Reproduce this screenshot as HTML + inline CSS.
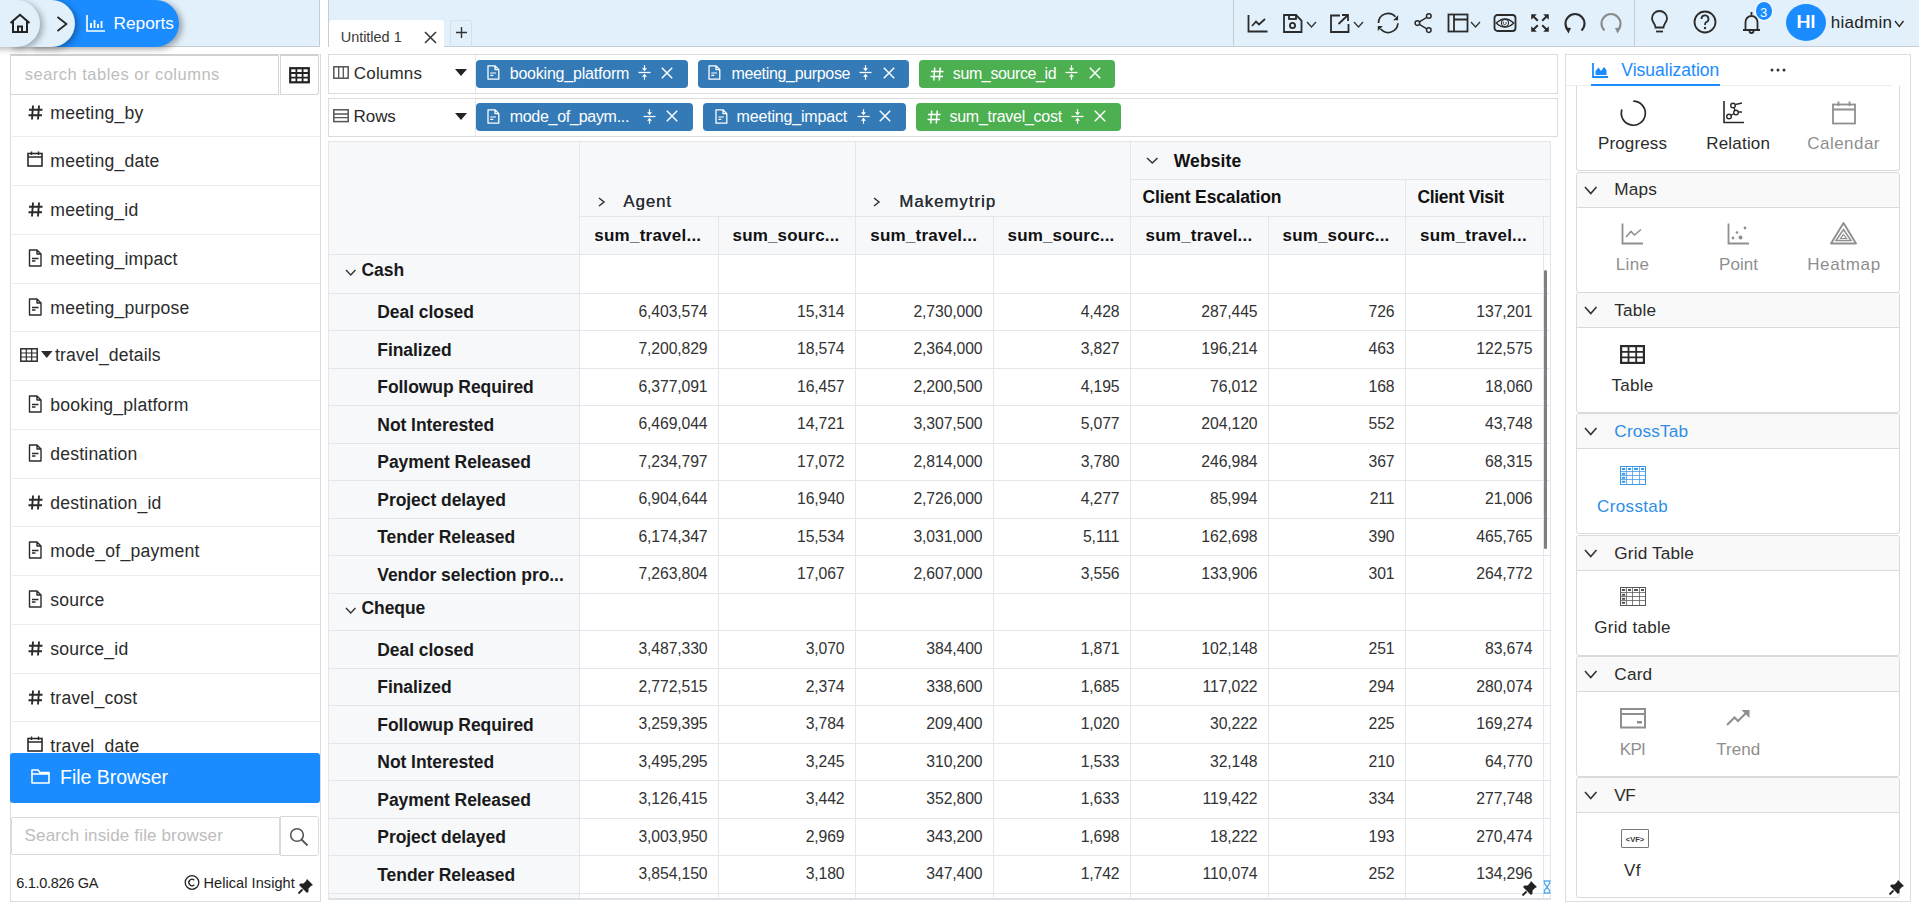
<!DOCTYPE html>
<html><head><meta charset="utf-8"><title>Reports</title>
<style>
html,body{margin:0;padding:0;}
body{width:1919px;height:910px;overflow:hidden;position:relative;background:#fff;font-family:"Liberation Sans",sans-serif;}
.a{position:absolute;box-sizing:border-box;}
svg.a{overflow:visible;}
.t{position:absolute;line-height:1;white-space:nowrap;}
</style></head><body>
<div class="a" style="left:0px;top:0px;width:320px;height:47px;background:#e1f0fa;border-right:1px solid #c8cdd2;border-bottom:1px solid #c8cdd2;"></div>
<div class="a" style="left:328px;top:0px;width:1591px;height:47px;background:#e1f0fa;border-left:1px solid #c8cdd2;border-bottom:1px solid #c8cdd2;"></div>
<div class="a" style="left:30px;top:0px;width:149px;height:47px;background:#1a8cff;border-radius:0 23.5px 23.5px 0;box-shadow:3px 2px 6px rgba(0,0,0,.35);z-index:1;"></div>
<div class="a" style="left:10px;top:0px;width:65px;height:47px;background:#e1f0fa;border-radius:0 23.5px 23.5px 0;box-shadow:3px 2px 6px rgba(0,0,0,.30);z-index:2;"></div>
<div class="a" style="left:-10px;top:0px;width:49.5px;height:47px;background:#e1f0fa;border-radius:0 23.5px 23.5px 0;box-shadow:3px 2px 6px rgba(0,0,0,.30);z-index:3;"></div>
<svg class="a" style="left:8.5px;top:13px;z-index:4;" width="22.0" height="20" viewBox="0 0 22.0 20" preserveAspectRatio="none"><path d="M1.5 10 L11 1.8 L20.5 10 M4 8 V19 H18 V8 M9 19 V13.5 H13 V19" fill="none" stroke="#222" stroke-width="2" stroke-linejoin="miter"/></svg>
<svg class="a" style="left:56px;top:16px;z-index:4;" width="12" height="16" viewBox="0 0 12 16" preserveAspectRatio="none"><path d="M1.5 1 L10.5 8 L1.5 15" fill="none" stroke="#222" stroke-width="1.7"/></svg>
<svg class="a" style="left:86px;top:15px;z-index:4;" width="20" height="17" viewBox="0 0 20 17" preserveAspectRatio="none"><path d="M1 0 V16 H19" fill="none" stroke="#fff" stroke-width="1.6"/><path d="M5 13 V8 M8.5 13 V5 M12 13 V9 M15.5 13 V6" stroke="#fff" stroke-width="1.8"/></svg>
<div class="t " style="top:14.65px;font-size:17.3px;color:#fff;left:113.50px;z-index:4;letter-spacing:-0.011px;">Reports</div>
<div class="a" style="left:329px;top:20px;width:115px;height:27px;background:#fff;border-radius:4px 4px 0 0;"></div>
<div class="t " style="top:30.32px;font-size:14.5px;color:#3a3a3a;left:340.70px;letter-spacing:-0.026px;">Untitled 1</div>
<svg class="a" style="left:424px;top:30.5px;" width="13" height="12.5" viewBox="0 0 13 12.5" preserveAspectRatio="none"><path d="M1 1 L12 12 M12 1 L1 12" stroke="#333" stroke-width="1.5"/></svg>
<div class="a" style="left:450px;top:20px;width:22px;height:27px;border:1px solid #d3e2ec;border-bottom:none;border-radius:3px 3px 0 0;"></div>
<svg class="a" style="left:455px;top:26px;" width="13" height="13" viewBox="0 0 13 13" preserveAspectRatio="none"><path d="M6.5 1 V12 M1 6.5 H12" stroke="#333" stroke-width="1.4"/></svg>
<div class="a" style="left:1233px;top:0px;width:1px;height:47px;background:#c8cdd2;"></div>
<div class="a" style="left:1634px;top:0px;width:1px;height:47px;background:#c8cdd2;"></div>
<svg class="a" style="left:1247px;top:14px;" width="22" height="19" viewBox="0 0 22 19" preserveAspectRatio="none"><path d="M1.5 1 V17.5 H20.5" stroke-width="1.8" fill="none" stroke="#2b2b2b"/><path d="M5 12 L9 7.5 L12 10.5 L18 5" stroke-width="1.8" fill="none" stroke="#2b2b2b"/></svg>
<svg class="a" style="left:1282px;top:13px;" width="22" height="20" viewBox="0 0 22 20" preserveAspectRatio="none"><path d="M2 2 H14 L19.5 7.5 V19 H2 Z" stroke-width="1.8" fill="none" stroke="#2b2b2b"/><rect x="7" y="2" width="7" height="4" stroke-width="1.8" fill="none" stroke="#2b2b2b"/><circle cx="10.5" cy="12.5" r="2.6" stroke-width="1.8" fill="none" stroke="#2b2b2b"/></svg>
<svg class="a" style="left:1306px;top:21px;" width="11" height="7" viewBox="0 0 11 7" preserveAspectRatio="none"><path d="M1 1 L5.5 6 L10 1" fill="none" stroke="#333" stroke-width="1.3"/></svg>
<svg class="a" style="left:1329px;top:13px;" width="22" height="20" viewBox="0 0 22 20" preserveAspectRatio="none"><path d="M11 2.5 H2 V19 H19.5 V11" stroke-width="1.8" fill="none" stroke="#2b2b2b"/><path d="M9.5 11 L18.5 2.5 M13 2 H19 V8" stroke-width="1.8" fill="none" stroke="#2b2b2b"/></svg>
<svg class="a" style="left:1353px;top:21px;" width="11" height="7" viewBox="0 0 11 7" preserveAspectRatio="none"><path d="M1 1 L5.5 6 L10 1" fill="none" stroke="#333" stroke-width="1.3"/></svg>
<svg class="a" style="left:1376px;top:12px;" width="24" height="22" viewBox="0 0 24 22" preserveAspectRatio="none"><path d="M2.5 11 A9.7 9.7 0 0 1 19.5 4.8 M21.9 11.3 A9.7 9.7 0 0 1 4.6 16.8" fill="none" stroke="#2b2b2b" stroke-width="1.7"/><path d="M22.1 3.3 V8.3 H17.1 Z M1.8 14 H6.8 L1.8 19 Z" fill="#2b2b2b"/></svg>
<svg class="a" style="left:1413px;top:12px;" width="20" height="22" viewBox="0 0 20 22" preserveAspectRatio="none"><circle cx="15.8" cy="4" r="2.3" fill="none" stroke="#2b2b2b" stroke-width="1.5"/><circle cx="4.4" cy="11.1" r="2.3" fill="none" stroke="#2b2b2b" stroke-width="1.5"/><circle cx="15.8" cy="18.1" r="2.3" fill="none" stroke="#2b2b2b" stroke-width="1.5"/><path d="M6.4 9.9 L13.8 5.3 M6.4 12.3 L13.8 16.8" fill="none" stroke="#2b2b2b" stroke-width="1.4"/></svg>
<svg class="a" style="left:1447px;top:13px;" width="23" height="20" viewBox="0 0 23 20" preserveAspectRatio="none"><rect x="1.5" y="1.5" width="19" height="17" stroke-width="1.8" fill="none" stroke="#2b2b2b"/><path d="M7 1.5 V18.5 M7 6.5 H20.5" stroke-width="1.8" fill="none" stroke="#2b2b2b"/></svg>
<svg class="a" style="left:1470px;top:21px;" width="11" height="7" viewBox="0 0 11 7" preserveAspectRatio="none"><path d="M1 1 L5.5 6 L10 1" fill="none" stroke="#333" stroke-width="1.3"/></svg>
<svg class="a" style="left:1493px;top:13px;" width="25" height="20" viewBox="0 0 25 20" preserveAspectRatio="none"><rect x="1.5" y="2" width="21" height="16" rx="3" stroke-width="1.8" fill="none" stroke="#2b2b2b"/><path d="M3.2 10 Q12 1.8 20.8 10 Q12 18.2 3.2 10 Z" fill="none" stroke="#2b2b2b" stroke-width="1.4"/><circle cx="12" cy="10" r="3.6" fill="none" stroke="#2b2b2b" stroke-width="1.1"/><path d="M13 9 A1.6 1.6 0 1 1 11 8.5" fill="none" stroke="#2b2b2b" stroke-width="0.9"/></svg>
<svg class="a" style="left:1530px;top:13px;" width="20" height="20" viewBox="0 0 20 20" preserveAspectRatio="none"><path d="M1.2 1.2 H6.8 L1.2 6.8 Z M18.8 1.2 H13.2 L18.8 6.8 Z M1.2 18.8 V13.2 L6.8 18.8 Z M18.8 18.8 V13.2 L13.2 18.8 Z" fill="#2b2b2b"/><path d="M3 3 L7.8 7.8 M17 3 L12.2 7.8 M3 17 L7.8 12.2 M17 17 L12.2 12.2" stroke="#2b2b2b" stroke-width="2"/></svg>
<svg class="a" style="left:1563px;top:12px;" width="24" height="22" viewBox="0 0 24 22" preserveAspectRatio="none"><path d="M5.5 18.5 A9.5 9.5 0 1 1 18.5 18.5" fill="none" stroke="#2b2b2b" stroke-width="2.1"/><path d="M2 15.5 L8 16 L5.5 21.5 Z" fill="#2b2b2b"/></svg>
<svg class="a" style="left:1599px;top:12px;" width="24" height="22" viewBox="0 0 24 22" preserveAspectRatio="none"><path d="M5.5 18.5 A9.5 9.5 0 1 1 18.5 18.5" fill="none" stroke="#8a8a8a" stroke-width="2.1"/><path d="M22 15.5 L16 16 L18.5 21.5 Z" fill="#8a8a8a"/></svg>
<svg class="a" style="left:1650px;top:10px;" width="19" height="24" viewBox="0 0 19 24" preserveAspectRatio="none"><path d="M5.5 17.5 C5.5 14 2 12 2 8.5 A7.5 7.5 0 0 1 17 8.5 C17 12 13.5 14 13.5 17.5 Z" stroke-width="1.8" fill="none" stroke="#2b2b2b"/><path d="M6 21.5 H13" stroke-width="1.8" fill="none" stroke="#2b2b2b"/></svg>
<svg class="a" style="left:1693px;top:10px;" width="24" height="24" viewBox="0 0 24 24" preserveAspectRatio="none"><circle cx="12" cy="12" r="10.5" stroke-width="1.8" fill="none" stroke="#2b2b2b"/><path d="M8.5 9 A3.5 3.5 0 1 1 13 12.3 C12 12.8 12 13.5 12 15" stroke-width="1.8" fill="none" stroke="#2b2b2b"/><circle cx="12" cy="18" r="1.2" fill="#2b2b2b"/></svg>
<svg class="a" style="left:1742px;top:10px;" width="19" height="24" viewBox="0 0 19 24" preserveAspectRatio="none"><path d="M3.5 19.5 V12 A6 6 0 0 1 15.5 12 V19.5 M1 20 H18" stroke-width="1.8" fill="none" stroke="#2b2b2b"/><path d="M9.5 2 V5" stroke-width="1.8" fill="none" stroke="#2b2b2b"/><path d="M7.5 21 A2 2 0 0 0 11.5 21" stroke-width="1.8" fill="none" stroke="#2b2b2b"/></svg>
<div class="a" style="left:1754.5px;top:1px;width:18.5px;height:19.5px;background:#1a8cff;border:1px solid #fff;border-radius:50%;box-sizing:border-box;"></div>
<div class="t " style="top:6.49px;font-size:13px;color:#fff;left:1753.70px;width:20px;text-align:center;">3</div>
<div class="a" style="left:1786px;top:4px;width:40px;height:37px;background:#1a8cff;border-radius:50%;"></div>
<div class="t " style="top:12.21px;font-size:19px;color:#fff;left:1786.00px;width:40px;text-align:center;text-shadow:0.4px 0 0 #fff,-0.2px 0 0 #fff;">HI</div>
<div class="t " style="top:13.70px;font-size:17px;color:#222;left:1830.80px;letter-spacing:0.281px;">hiadmin</div>
<svg class="a" style="left:1893.5px;top:19.5px;" width="10.5" height="7.5" viewBox="0 0 10.5 7.5" preserveAspectRatio="none"><path d="M1 1 L5.25 6.5 L9.5 1" fill="none" stroke="#222" stroke-width="1.3"/></svg>
<div class="a" style="left:10px;top:54px;width:311px;height:848px;border:1px solid #dcdcdc;background:#fff;"></div>
<div class="a" style="left:10px;top:54px;width:269px;height:41px;border:1px solid #d6d6d6;border-top:2px solid #d0d0d0;border-radius:2px 0 0 2px;"></div>
<div class="t " style="top:66.32px;font-size:16.5px;color:#bdbdbd;left:24.80px;letter-spacing:0.482px;">search tables or columns</div>
<div class="a" style="left:279.5px;top:54px;width:39.5px;height:41px;border:1px solid #d6d6d6;border-top:2px solid #d0d0d0;border-radius:0 3px 3px 0;"></div>
<svg class="a" style="left:288.5px;top:66.5px;" width="21.5" height="17.0" viewBox="0 0 21.5 17.0" preserveAspectRatio="none"><rect x="1.2" y="1.2" width="18.6" height="14.1" fill="none" stroke="#222" stroke-width="2.2"/><path d="M7.4 1 V15.5 M13.6 1 V15.5 M1 6 H20 M1 10.6 H20" stroke="#222" stroke-width="1.8"/></svg>
<svg class="a" style="left:27.5px;top:104.6px;" width="15.0" height="15.0" viewBox="0 0 15.0 15.0" preserveAspectRatio="none"><path d="M5 0.5 L4 14.5 M11 0.5 L10 14.5 M1 4.8 H14.5 M0.5 10.2 H14" stroke="#2b2b2b" stroke-width="1.9"/></svg>
<div class="t " style="top:104.69px;font-size:17.6px;color:#2b2b2b;left:50.30px;letter-spacing:0.220px;">meeting_by</div>
<div class="a" style="left:10px;top:136.3px;width:310px;height:1.0px;background:#ececec;"></div>
<svg class="a" style="left:26.8px;top:151.35px;" width="15.999999999999996" height="16.0" viewBox="0 0 15.999999999999996 16.0" preserveAspectRatio="none"><rect x="1" y="2.5" width="14" height="12.5" fill="none" stroke="#2b2b2b" stroke-width="1.6"/><path d="M1 6 H15 M4.5 0.5 V4 M11.5 0.5 V4" stroke="#2b2b2b" stroke-width="1.4"/></svg>
<div class="t " style="top:153.44px;font-size:17.6px;color:#2b2b2b;left:50.30px;letter-spacing:0.215px;">meeting_date</div>
<div class="a" style="left:10px;top:185.05px;width:310px;height:1.0px;background:#ececec;"></div>
<svg class="a" style="left:27.5px;top:202.1px;" width="15.0" height="15.0" viewBox="0 0 15.0 15.0" preserveAspectRatio="none"><path d="M5 0.5 L4 14.5 M11 0.5 L10 14.5 M1 4.8 H14.5 M0.5 10.2 H14" stroke="#2b2b2b" stroke-width="1.9"/></svg>
<div class="t " style="top:202.19px;font-size:17.6px;color:#2b2b2b;left:50.30px;letter-spacing:0.208px;">meeting_id</div>
<div class="a" style="left:10px;top:233.8px;width:310px;height:1.0px;background:#ececec;"></div>
<svg class="a" style="left:27.8px;top:248.85000000000002px;" width="13.999999999999996" height="18.0" viewBox="0 0 13.999999999999996 18.0" preserveAspectRatio="none"><path d="M1.5 1 H9 L13 5 V17 H1.5 Z M9 1 V5 H13" fill="none" stroke="#2b2b2b" stroke-width="1.4" stroke-linejoin="round"/><path d="M4 9.5 H10.5 M4 12 H7.5" stroke="#2b2b2b" stroke-width="1.3"/></svg>
<div class="t " style="top:250.94px;font-size:17.6px;color:#2b2b2b;left:50.30px;letter-spacing:0.215px;">meeting_impact</div>
<div class="a" style="left:10px;top:282.55px;width:310px;height:1.0px;background:#ececec;"></div>
<svg class="a" style="left:27.8px;top:297.6px;" width="13.999999999999996" height="18.0" viewBox="0 0 13.999999999999996 18.0" preserveAspectRatio="none"><path d="M1.5 1 H9 L13 5 V17 H1.5 Z M9 1 V5 H13" fill="none" stroke="#2b2b2b" stroke-width="1.4" stroke-linejoin="round"/><path d="M4 9.5 H10.5 M4 12 H7.5" stroke="#2b2b2b" stroke-width="1.3"/></svg>
<div class="t " style="top:299.69px;font-size:17.6px;color:#2b2b2b;left:50.30px;letter-spacing:0.219px;">meeting_purpose</div>
<div class="a" style="left:10px;top:331.3px;width:310px;height:1.0px;background:#ececec;"></div>
<svg class="a" style="left:19.5px;top:348.15000000000003px;" width="18.0" height="14.0" viewBox="0 0 18.0 14.0" preserveAspectRatio="none"><rect x="0.8" y="0.8" width="16.4" height="12.4" fill="none" stroke="#2b2b2b" stroke-width="1.5"/><path d="M6.3 1 V13 M11.7 1 V13 M1 5 H17 M1 9 H17" stroke="#2b2b2b" stroke-width="1.2"/></svg>
<svg class="a" style="left:41px;top:350.85px;" width="12" height="7.0" viewBox="0 0 12 7.0" preserveAspectRatio="none"><path d="M0 0 H11.5 L5.75 7 Z" fill="#2b2b2b"/></svg>
<div class="t " style="top:346.94px;font-size:17.6px;color:#2b2b2b;left:55.00px;letter-spacing:0.150px;">travel_details</div>
<div class="a" style="left:10px;top:380.05px;width:310px;height:1.0px;background:#ececec;"></div>
<svg class="a" style="left:27.8px;top:395.1px;" width="13.999999999999996" height="18.0" viewBox="0 0 13.999999999999996 18.0" preserveAspectRatio="none"><path d="M1.5 1 H9 L13 5 V17 H1.5 Z M9 1 V5 H13" fill="none" stroke="#2b2b2b" stroke-width="1.4" stroke-linejoin="round"/><path d="M4 9.5 H10.5 M4 12 H7.5" stroke="#2b2b2b" stroke-width="1.3"/></svg>
<div class="t " style="top:397.19px;font-size:17.6px;color:#2b2b2b;left:50.30px;letter-spacing:0.204px;">booking_platform</div>
<div class="a" style="left:10px;top:428.8px;width:310px;height:1.0px;background:#ececec;"></div>
<svg class="a" style="left:27.8px;top:443.85px;" width="13.999999999999996" height="18.0" viewBox="0 0 13.999999999999996 18.0" preserveAspectRatio="none"><path d="M1.5 1 H9 L13 5 V17 H1.5 Z M9 1 V5 H13" fill="none" stroke="#2b2b2b" stroke-width="1.4" stroke-linejoin="round"/><path d="M4 9.5 H10.5 M4 12 H7.5" stroke="#2b2b2b" stroke-width="1.3"/></svg>
<div class="t " style="top:445.94px;font-size:17.6px;color:#2b2b2b;left:50.30px;letter-spacing:0.187px;">destination</div>
<div class="a" style="left:10px;top:477.55px;width:310px;height:1.0px;background:#ececec;"></div>
<svg class="a" style="left:27.5px;top:494.6px;" width="15.0" height="15.0" viewBox="0 0 15.0 15.0" preserveAspectRatio="none"><path d="M5 0.5 L4 14.5 M11 0.5 L10 14.5 M1 4.8 H14.5 M0.5 10.2 H14" stroke="#2b2b2b" stroke-width="1.9"/></svg>
<div class="t " style="top:494.69px;font-size:17.6px;color:#2b2b2b;left:50.30px;letter-spacing:0.188px;">destination_id</div>
<div class="a" style="left:10px;top:526.3px;width:310px;height:1.0px;background:#ececec;"></div>
<svg class="a" style="left:27.8px;top:541.35px;" width="13.999999999999996" height="18.0" viewBox="0 0 13.999999999999996 18.0" preserveAspectRatio="none"><path d="M1.5 1 H9 L13 5 V17 H1.5 Z M9 1 V5 H13" fill="none" stroke="#2b2b2b" stroke-width="1.4" stroke-linejoin="round"/><path d="M4 9.5 H10.5 M4 12 H7.5" stroke="#2b2b2b" stroke-width="1.3"/></svg>
<div class="t " style="top:543.44px;font-size:17.6px;color:#2b2b2b;left:50.30px;letter-spacing:0.235px;">mode_of_payment</div>
<div class="a" style="left:10px;top:575.05px;width:310px;height:1.0px;background:#ececec;"></div>
<svg class="a" style="left:27.8px;top:590.1px;" width="13.999999999999996" height="18.0" viewBox="0 0 13.999999999999996 18.0" preserveAspectRatio="none"><path d="M1.5 1 H9 L13 5 V17 H1.5 Z M9 1 V5 H13" fill="none" stroke="#2b2b2b" stroke-width="1.4" stroke-linejoin="round"/><path d="M4 9.5 H10.5 M4 12 H7.5" stroke="#2b2b2b" stroke-width="1.3"/></svg>
<div class="t " style="top:592.19px;font-size:17.6px;color:#2b2b2b;left:50.30px;letter-spacing:0.213px;">source</div>
<div class="a" style="left:10px;top:623.8px;width:310px;height:1.0px;background:#ececec;"></div>
<svg class="a" style="left:27.5px;top:640.85px;" width="15.0" height="15.0" viewBox="0 0 15.0 15.0" preserveAspectRatio="none"><path d="M5 0.5 L4 14.5 M11 0.5 L10 14.5 M1 4.8 H14.5 M0.5 10.2 H14" stroke="#2b2b2b" stroke-width="1.9"/></svg>
<div class="t " style="top:640.94px;font-size:17.6px;color:#2b2b2b;left:50.30px;letter-spacing:0.205px;">source_id</div>
<div class="a" style="left:10px;top:672.55px;width:310px;height:1.0px;background:#ececec;"></div>
<svg class="a" style="left:27.5px;top:689.6px;" width="15.0" height="15.0" viewBox="0 0 15.0 15.0" preserveAspectRatio="none"><path d="M5 0.5 L4 14.5 M11 0.5 L10 14.5 M1 4.8 H14.5 M0.5 10.2 H14" stroke="#2b2b2b" stroke-width="1.9"/></svg>
<div class="t " style="top:689.69px;font-size:17.6px;color:#2b2b2b;left:50.30px;letter-spacing:0.187px;">travel_cost</div>
<div class="a" style="left:10px;top:721.3px;width:310px;height:1.0px;background:#ececec;"></div>
<svg class="a" style="left:26.8px;top:736.35px;" width="15.999999999999996" height="16.0" viewBox="0 0 15.999999999999996 16.0" preserveAspectRatio="none"><rect x="1" y="2.5" width="14" height="12.5" fill="none" stroke="#2b2b2b" stroke-width="1.6"/><path d="M1 6 H15 M4.5 0.5 V4 M11.5 0.5 V4" stroke="#2b2b2b" stroke-width="1.4"/></svg>
<div class="t " style="top:738.44px;font-size:17.6px;color:#2b2b2b;left:50.30px;letter-spacing:0.192px;">travel_date</div>
<div class="a" style="left:10px;top:753px;width:310px;height:49.5px;background:#1a8cff;border-radius:3px;"></div>
<svg class="a" style="left:30.5px;top:768.5px;" width="19.5" height="15.0" viewBox="0 0 19.5 15.0" preserveAspectRatio="none"><path d="M1 1 H7 L9 3.5 H18 V14 H1 Z M1 5 H18" fill="none" stroke="#fff" stroke-width="1.6" stroke-linejoin="round"/></svg>
<div class="t " style="top:767.68px;font-size:19.5px;color:#fff;left:60.10px;letter-spacing:-0.030px;">File Browser</div>
<div class="a" style="left:11px;top:816.5px;width:269px;height:38.5px;border:1px solid #d9d9d9;border-radius:2px 0 0 2px;"></div>
<div class="t " style="top:826.80px;font-size:17px;color:#bdbdbd;left:24.60px;letter-spacing:0.144px;">Search inside file browser</div>
<div class="a" style="left:279.5px;top:816px;width:39.0px;height:39.5px;border:1px solid #d9d9d9;border-radius:0 3px 3px 0;"></div>
<svg class="a" style="left:289px;top:826.5px;" width="21" height="20.0" viewBox="0 0 21 20.0" preserveAspectRatio="none"><circle cx="8" cy="8" r="6.3" fill="none" stroke="#555" stroke-width="1.6"/><path d="M12.5 12.5 L18.5 18.5" stroke="#555" stroke-width="1.8"/></svg>
<div class="t " style="top:876.32px;font-size:14.5px;color:#222;left:16.30px;letter-spacing:-0.304px;">6.1.0.826 GA</div>
<svg class="a" style="left:184px;top:875px;" width="16.5" height="15.5" viewBox="0 0 16.5 15.5" preserveAspectRatio="none"><circle cx="8" cy="7.5" r="6.8" fill="none" stroke="#222" stroke-width="1.3"/><path d="M10.3 5.2 A3.2 3.2 0 1 0 10.3 9.8" fill="none" stroke="#222" stroke-width="1.3"/></svg>
<div class="t " style="top:876.32px;font-size:14.5px;color:#222;left:203.50px;letter-spacing:0.069px;">Helical Insight</div>
<svg class="a" style="left:298px;top:878px;" width="16" height="16" viewBox="0 0 16 16" preserveAspectRatio="none"><path d="M9 1 L15 7 L13 8 L10.5 10.5 L10.5 13.5 L9 15 L1 7 L2.5 5.5 L5.5 5.5 L8 3 Z" fill="#222"/><path d="M4.5 11.5 L0.5 15.5" stroke="#222" stroke-width="1.8"/></svg>
<div class="a" style="left:328px;top:54px;width:1230px;height:40px;border:1px solid #dcdcdc;"></div>
<div class="a" style="left:475px;top:55px;width:1px;height:38px;background:#e6e6e6;"></div>
<div class="a" style="left:328px;top:98px;width:1230px;height:39px;border:1px solid #dcdcdc;"></div>
<div class="a" style="left:475px;top:99px;width:1px;height:37px;background:#e6e6e6;"></div>
<svg class="a" style="left:333px;top:66px;" width="16" height="13" viewBox="0 0 16 13" preserveAspectRatio="none"><rect x="0.8" y="0.8" width="14.4" height="11.4" fill="none" stroke="#555" stroke-width="1.5"/><path d="M5.7 1 V12 M10.3 1 V12" stroke="#555" stroke-width="1.3"/></svg>
<div class="t " style="top:64.90px;font-size:17px;color:#2b2b2b;left:353.80px;letter-spacing:0.188px;">Columns</div>
<svg class="a" style="left:455px;top:69px;" width="12" height="7" viewBox="0 0 12 7" preserveAspectRatio="none"><path d="M0 0 H12 L6 7 Z" fill="#222"/></svg>
<svg class="a" style="left:333px;top:108.5px;" width="16" height="13.5" viewBox="0 0 16 13.5" preserveAspectRatio="none"><rect x="0.8" y="0.8" width="14.4" height="11.8" fill="none" stroke="#555" stroke-width="1.5"/><path d="M1 5 H15 M1 8.6 H15" stroke="#555" stroke-width="1.3"/></svg>
<div class="t " style="top:108.30px;font-size:17px;color:#2b2b2b;left:353.60px;letter-spacing:-0.077px;">Rows</div>
<svg class="a" style="left:455px;top:113px;" width="12" height="7" viewBox="0 0 12 7" preserveAspectRatio="none"><path d="M0 0 H12 L6 7 Z" fill="#222"/></svg>
<div class="a" style="left:476px;top:60px;width:212px;height:27.799999999999997px;background:#337ab7;border-radius:4px;"></div>
<svg class="a" style="left:487.3px;top:65.3px;" width="12.699999999999989" height="15.0" viewBox="0 0 12.699999999999989 15.0" preserveAspectRatio="none"><path d="M1 0.8 H8 L11.8 4.6 V14.2 H1 Z M8 0.8 V4.6 H11.8" fill="none" stroke="#fff" stroke-width="1.3" stroke-linejoin="round"/><path d="M3.3 8 H9 M3.3 10.3 H6.3" stroke="#fff" stroke-width="1.2"/></svg>
<div class="t " style="top:65.95px;font-size:16px;color:#fff;left:509.70px;letter-spacing:-0.203px;">booking_platform</div>
<svg class="a" style="left:638px;top:65.4px;" width="13" height="15.0" viewBox="0 0 13 15.0" preserveAspectRatio="none"><path d="M0.5 7.5 H12.5" stroke="#fff" stroke-width="1.3"/><path d="M6.5 0.3 V4 M6.5 11 V14.7" stroke="#fff" stroke-width="1.2"/><path d="M4 3.2 L6.5 6.2 L9 3.2 Z M4 11.8 L6.5 8.8 L9 11.8 Z" fill="#fff"/></svg>
<svg class="a" style="left:660.6px;top:67px;" width="12.0" height="12" viewBox="0 0 12.0 12" preserveAspectRatio="none"><path d="M0.8 0.8 L11.2 11.2 M11.2 0.8 L0.8 11.2" stroke="#fff" stroke-width="1.5"/></svg>
<div class="a" style="left:698px;top:60px;width:211px;height:27.799999999999997px;background:#337ab7;border-radius:4px;"></div>
<svg class="a" style="left:708.3px;top:65.3px;" width="12.700000000000045" height="15.0" viewBox="0 0 12.700000000000045 15.0" preserveAspectRatio="none"><path d="M1 0.8 H8 L11.8 4.6 V14.2 H1 Z M8 0.8 V4.6 H11.8" fill="none" stroke="#fff" stroke-width="1.3" stroke-linejoin="round"/><path d="M3.3 8 H9 M3.3 10.3 H6.3" stroke="#fff" stroke-width="1.2"/></svg>
<div class="t " style="top:65.95px;font-size:16px;color:#fff;left:731.40px;letter-spacing:-0.323px;">meeting_purpose</div>
<svg class="a" style="left:859.2px;top:65.4px;" width="13.0" height="15.0" viewBox="0 0 13.0 15.0" preserveAspectRatio="none"><path d="M0.5 7.5 H12.5" stroke="#fff" stroke-width="1.3"/><path d="M6.5 0.3 V4 M6.5 11 V14.7" stroke="#fff" stroke-width="1.2"/><path d="M4 3.2 L6.5 6.2 L9 3.2 Z M4 11.8 L6.5 8.8 L9 11.8 Z" fill="#fff"/></svg>
<svg class="a" style="left:882.6px;top:67px;" width="12.0" height="12" viewBox="0 0 12.0 12" preserveAspectRatio="none"><path d="M0.8 0.8 L11.2 11.2 M11.2 0.8 L0.8 11.2" stroke="#fff" stroke-width="1.5"/></svg>
<div class="a" style="left:919px;top:60px;width:196px;height:27.799999999999997px;background:#4caf50;border-radius:4px;"></div>
<svg class="a" style="left:929.5px;top:67px;" width="14.0" height="14" viewBox="0 0 14.0 14" preserveAspectRatio="none"><path d="M4.7 0.5 L3.8 13.5 M10.2 0.5 L9.3 13.5 M1 4.5 H13.5 M0.5 9.5 H13" stroke="#fff" stroke-width="1.5"/></svg>
<div class="t " style="top:65.95px;font-size:16px;color:#fff;left:952.80px;letter-spacing:-0.385px;">sum_source_id</div>
<svg class="a" style="left:1065.3px;top:65.4px;" width="13.0" height="15.0" viewBox="0 0 13.0 15.0" preserveAspectRatio="none"><path d="M0.5 7.5 H12.5" stroke="#fff" stroke-width="1.3"/><path d="M6.5 0.3 V4 M6.5 11 V14.7" stroke="#fff" stroke-width="1.2"/><path d="M4 3.2 L6.5 6.2 L9 3.2 Z M4 11.8 L6.5 8.8 L9 11.8 Z" fill="#fff"/></svg>
<svg class="a" style="left:1088.8px;top:67px;" width="12.0" height="12" viewBox="0 0 12.0 12" preserveAspectRatio="none"><path d="M0.8 0.8 L11.2 11.2 M11.2 0.8 L0.8 11.2" stroke="#fff" stroke-width="1.5"/></svg>
<div class="a" style="left:476px;top:103.2px;width:217px;height:27.799999999999997px;background:#337ab7;border-radius:4px;"></div>
<svg class="a" style="left:487.3px;top:108.5px;" width="12.699999999999989" height="15.0" viewBox="0 0 12.699999999999989 15.0" preserveAspectRatio="none"><path d="M1 0.8 H8 L11.8 4.6 V14.2 H1 Z M8 0.8 V4.6 H11.8" fill="none" stroke="#fff" stroke-width="1.3" stroke-linejoin="round"/><path d="M3.3 8 H9 M3.3 10.3 H6.3" stroke="#fff" stroke-width="1.2"/></svg>
<div class="t " style="top:108.95px;font-size:16px;color:#fff;left:509.70px;letter-spacing:-0.275px;">mode_of_paym...</div>
<svg class="a" style="left:643px;top:108.60000000000001px;" width="13" height="15.0" viewBox="0 0 13 15.0" preserveAspectRatio="none"><path d="M0.5 7.5 H12.5" stroke="#fff" stroke-width="1.3"/><path d="M6.5 0.3 V4 M6.5 11 V14.7" stroke="#fff" stroke-width="1.2"/><path d="M4 3.2 L6.5 6.2 L9 3.2 Z M4 11.8 L6.5 8.8 L9 11.8 Z" fill="#fff"/></svg>
<svg class="a" style="left:665.8px;top:110.2px;" width="12.0" height="12.0" viewBox="0 0 12.0 12.0" preserveAspectRatio="none"><path d="M0.8 0.8 L11.2 11.2 M11.2 0.8 L0.8 11.2" stroke="#fff" stroke-width="1.5"/></svg>
<div class="a" style="left:703px;top:103.2px;width:203px;height:27.799999999999997px;background:#337ab7;border-radius:4px;"></div>
<svg class="a" style="left:714.5999999999999px;top:108.5px;" width="12.700000000000045" height="15.0" viewBox="0 0 12.700000000000045 15.0" preserveAspectRatio="none"><path d="M1 0.8 H8 L11.8 4.6 V14.2 H1 Z M8 0.8 V4.6 H11.8" fill="none" stroke="#fff" stroke-width="1.3" stroke-linejoin="round"/><path d="M3.3 8 H9 M3.3 10.3 H6.3" stroke="#fff" stroke-width="1.2"/></svg>
<div class="t " style="top:108.95px;font-size:16px;color:#fff;left:736.60px;letter-spacing:-0.182px;">meeting_impact</div>
<svg class="a" style="left:856.6px;top:108.60000000000001px;" width="13.0" height="15.0" viewBox="0 0 13.0 15.0" preserveAspectRatio="none"><path d="M0.5 7.5 H12.5" stroke="#fff" stroke-width="1.3"/><path d="M6.5 0.3 V4 M6.5 11 V14.7" stroke="#fff" stroke-width="1.2"/><path d="M4 3.2 L6.5 6.2 L9 3.2 Z M4 11.8 L6.5 8.8 L9 11.8 Z" fill="#fff"/></svg>
<svg class="a" style="left:878.7px;top:110.2px;" width="12.0" height="12.0" viewBox="0 0 12.0 12.0" preserveAspectRatio="none"><path d="M0.8 0.8 L11.2 11.2 M11.2 0.8 L0.8 11.2" stroke="#fff" stroke-width="1.5"/></svg>
<div class="a" style="left:916px;top:103.2px;width:205px;height:27.799999999999997px;background:#4caf50;border-radius:4px;"></div>
<svg class="a" style="left:926.5px;top:110.2px;" width="14.0" height="14.0" viewBox="0 0 14.0 14.0" preserveAspectRatio="none"><path d="M4.7 0.5 L3.8 13.5 M10.2 0.5 L9.3 13.5 M1 4.5 H13.5 M0.5 9.5 H13" stroke="#fff" stroke-width="1.5"/></svg>
<div class="t " style="top:108.95px;font-size:16px;color:#fff;left:949.50px;letter-spacing:-0.280px;">sum_travel_cost</div>
<svg class="a" style="left:1071.1px;top:108.60000000000001px;" width="13.0" height="15.0" viewBox="0 0 13.0 15.0" preserveAspectRatio="none"><path d="M0.5 7.5 H12.5" stroke="#fff" stroke-width="1.3"/><path d="M6.5 0.3 V4 M6.5 11 V14.7" stroke="#fff" stroke-width="1.2"/><path d="M4 3.2 L6.5 6.2 L9 3.2 Z M4 11.8 L6.5 8.8 L9 11.8 Z" fill="#fff"/></svg>
<svg class="a" style="left:1093.9px;top:110.2px;" width="12.0" height="12.0" viewBox="0 0 12.0 12.0" preserveAspectRatio="none"><path d="M0.8 0.8 L11.2 11.2 M11.2 0.8 L0.8 11.2" stroke="#fff" stroke-width="1.5"/></svg>
<div class="a" style="left:328px;top:141px;width:1223px;height:759px;border:1px solid #e3e6eb;border-bottom:2px solid #dde1e6;background:#fff;"></div>
<div class="a" style="left:329px;top:142px;width:1221px;height:112px;background:#f7f8fa;"></div>
<div class="a" style="left:329px;top:254px;width:250px;height:644px;background:#f7f8fa;"></div>
<div class="a" style="left:1130px;top:179px;width:420px;height:1px;background:#e3e6eb;"></div>
<div class="a" style="left:579px;top:216px;width:971px;height:1px;background:#e3e6eb;"></div>
<div class="a" style="left:329px;top:254px;width:1221px;height:1px;background:#e3e6eb;"></div>
<div class="a" style="left:579px;top:142px;width:1px;height:756px;background:#e3e6eb;"></div>
<div class="a" style="left:855px;top:142px;width:1px;height:756px;background:#e3e6eb;"></div>
<div class="a" style="left:1130px;top:142px;width:1px;height:756px;background:#e3e6eb;"></div>
<div class="a" style="left:1405px;top:179px;width:1px;height:719px;background:#e3e6eb;"></div>
<div class="a" style="left:718px;top:216px;width:1px;height:682px;background:#e3e6eb;"></div>
<div class="a" style="left:993px;top:216px;width:1px;height:682px;background:#e3e6eb;"></div>
<div class="a" style="left:1268px;top:216px;width:1px;height:682px;background:#e3e6eb;"></div>
<div class="a" style="left:1543px;top:216px;width:1px;height:682px;background:#e3e6eb;"></div>
<div class="a" style="left:329px;top:293px;width:1221px;height:1px;background:#e3e6eb;"></div>
<svg class="a" style="left:345px;top:268.5px;" width="11.5" height="7.0" viewBox="0 0 11.5 7.0" preserveAspectRatio="none"><path d="M1 1 L5.75 6 L10.5 1" fill="none" stroke="#333" stroke-width="1.4"/></svg>
<div class="t " style="top:261.68px;font-size:17.5px;color:#1a1a1a;font-weight:700;left:361.50px;letter-spacing:-0.074px;">Cash</div>
<div class="a" style="left:329px;top:330px;width:1221px;height:1px;background:#e3e6eb;"></div>
<div class="t " style="top:304.03px;font-size:17.5px;color:#1a1a1a;font-weight:700;left:377.30px;letter-spacing:-0.061px;">Deal closed</div>
<div class="t " style="top:303.61px;font-size:15.75px;color:#333;right:1211.40px;text-align:right;letter-spacing:-0.108px;margin-right:0.108px;">6,403,574</div>
<div class="t " style="top:303.61px;font-size:15.75px;color:#333;right:1074.40px;text-align:right;letter-spacing:-0.111px;margin-right:0.111px;">15,314</div>
<div class="t " style="top:303.61px;font-size:15.75px;color:#333;right:936.40px;text-align:right;letter-spacing:-0.108px;margin-right:0.108px;">2,730,000</div>
<div class="t " style="top:303.61px;font-size:15.75px;color:#333;right:799.40px;text-align:right;letter-spacing:-0.109px;margin-right:0.109px;">4,428</div>
<div class="t " style="top:303.61px;font-size:15.75px;color:#333;right:661.40px;text-align:right;letter-spacing:-0.112px;margin-right:0.112px;">287,445</div>
<div class="t " style="top:303.61px;font-size:15.75px;color:#333;right:524.40px;text-align:right;letter-spacing:-0.121px;margin-right:0.121px;">726</div>
<div class="t " style="top:303.61px;font-size:15.75px;color:#333;right:386.40px;text-align:right;letter-spacing:-0.112px;margin-right:0.112px;">137,201</div>
<div class="a" style="left:329px;top:368px;width:1221px;height:1px;background:#e3e6eb;"></div>
<div class="t " style="top:341.53px;font-size:17.5px;color:#1a1a1a;font-weight:700;left:377.30px;letter-spacing:-0.057px;">Finalized</div>
<div class="t " style="top:341.11px;font-size:15.75px;color:#333;right:1211.40px;text-align:right;letter-spacing:-0.108px;margin-right:0.108px;">7,200,829</div>
<div class="t " style="top:341.11px;font-size:15.75px;color:#333;right:1074.40px;text-align:right;letter-spacing:-0.111px;margin-right:0.111px;">18,574</div>
<div class="t " style="top:341.11px;font-size:15.75px;color:#333;right:936.40px;text-align:right;letter-spacing:-0.108px;margin-right:0.108px;">2,364,000</div>
<div class="t " style="top:341.11px;font-size:15.75px;color:#333;right:799.40px;text-align:right;letter-spacing:-0.109px;margin-right:0.109px;">3,827</div>
<div class="t " style="top:341.11px;font-size:15.75px;color:#333;right:661.40px;text-align:right;letter-spacing:-0.112px;margin-right:0.112px;">196,214</div>
<div class="t " style="top:341.11px;font-size:15.75px;color:#333;right:524.40px;text-align:right;letter-spacing:-0.121px;margin-right:0.121px;">463</div>
<div class="t " style="top:341.11px;font-size:15.75px;color:#333;right:386.40px;text-align:right;letter-spacing:-0.112px;margin-right:0.112px;">122,575</div>
<div class="a" style="left:329px;top:405px;width:1221px;height:1px;background:#e3e6eb;"></div>
<div class="t " style="top:379.03px;font-size:17.5px;color:#1a1a1a;font-weight:700;left:377.30px;letter-spacing:-0.064px;">Followup Required</div>
<div class="t " style="top:378.61px;font-size:15.75px;color:#333;right:1211.40px;text-align:right;letter-spacing:-0.108px;margin-right:0.108px;">6,377,091</div>
<div class="t " style="top:378.61px;font-size:15.75px;color:#333;right:1074.40px;text-align:right;letter-spacing:-0.111px;margin-right:0.111px;">16,457</div>
<div class="t " style="top:378.61px;font-size:15.75px;color:#333;right:936.40px;text-align:right;letter-spacing:-0.108px;margin-right:0.108px;">2,200,500</div>
<div class="t " style="top:378.61px;font-size:15.75px;color:#333;right:799.40px;text-align:right;letter-spacing:-0.109px;margin-right:0.109px;">4,195</div>
<div class="t " style="top:378.61px;font-size:15.75px;color:#333;right:661.40px;text-align:right;letter-spacing:-0.111px;margin-right:0.111px;">76,012</div>
<div class="t " style="top:378.61px;font-size:15.75px;color:#333;right:524.40px;text-align:right;letter-spacing:-0.121px;margin-right:0.121px;">168</div>
<div class="t " style="top:378.61px;font-size:15.75px;color:#333;right:386.40px;text-align:right;letter-spacing:-0.111px;margin-right:0.111px;">18,060</div>
<div class="a" style="left:329px;top:443px;width:1221px;height:1px;background:#e3e6eb;"></div>
<div class="t " style="top:416.53px;font-size:17.5px;color:#1a1a1a;font-weight:700;left:377.30px;letter-spacing:-0.058px;">Not Interested</div>
<div class="t " style="top:416.11px;font-size:15.75px;color:#333;right:1211.40px;text-align:right;letter-spacing:-0.108px;margin-right:0.108px;">6,469,044</div>
<div class="t " style="top:416.11px;font-size:15.75px;color:#333;right:1074.40px;text-align:right;letter-spacing:-0.111px;margin-right:0.111px;">14,721</div>
<div class="t " style="top:416.11px;font-size:15.75px;color:#333;right:936.40px;text-align:right;letter-spacing:-0.108px;margin-right:0.108px;">3,307,500</div>
<div class="t " style="top:416.11px;font-size:15.75px;color:#333;right:799.40px;text-align:right;letter-spacing:-0.109px;margin-right:0.109px;">5,077</div>
<div class="t " style="top:416.11px;font-size:15.75px;color:#333;right:661.40px;text-align:right;letter-spacing:-0.112px;margin-right:0.112px;">204,120</div>
<div class="t " style="top:416.11px;font-size:15.75px;color:#333;right:524.40px;text-align:right;letter-spacing:-0.121px;margin-right:0.121px;">552</div>
<div class="t " style="top:416.11px;font-size:15.75px;color:#333;right:386.40px;text-align:right;letter-spacing:-0.111px;margin-right:0.111px;">43,748</div>
<div class="a" style="left:329px;top:480px;width:1221px;height:1px;background:#e3e6eb;"></div>
<div class="t " style="top:454.03px;font-size:17.5px;color:#1a1a1a;font-weight:700;left:377.30px;letter-spacing:-0.066px;">Payment Released</div>
<div class="t " style="top:453.61px;font-size:15.75px;color:#333;right:1211.40px;text-align:right;letter-spacing:-0.108px;margin-right:0.108px;">7,234,797</div>
<div class="t " style="top:453.61px;font-size:15.75px;color:#333;right:1074.40px;text-align:right;letter-spacing:-0.111px;margin-right:0.111px;">17,072</div>
<div class="t " style="top:453.61px;font-size:15.75px;color:#333;right:936.40px;text-align:right;letter-spacing:-0.108px;margin-right:0.108px;">2,814,000</div>
<div class="t " style="top:453.61px;font-size:15.75px;color:#333;right:799.40px;text-align:right;letter-spacing:-0.109px;margin-right:0.109px;">3,780</div>
<div class="t " style="top:453.61px;font-size:15.75px;color:#333;right:661.40px;text-align:right;letter-spacing:-0.112px;margin-right:0.112px;">246,984</div>
<div class="t " style="top:453.61px;font-size:15.75px;color:#333;right:524.40px;text-align:right;letter-spacing:-0.121px;margin-right:0.121px;">367</div>
<div class="t " style="top:453.61px;font-size:15.75px;color:#333;right:386.40px;text-align:right;letter-spacing:-0.111px;margin-right:0.111px;">68,315</div>
<div class="a" style="left:329px;top:518px;width:1221px;height:1px;background:#e3e6eb;"></div>
<div class="t " style="top:491.53px;font-size:17.5px;color:#1a1a1a;font-weight:700;left:377.30px;letter-spacing:-0.059px;">Project delayed</div>
<div class="t " style="top:491.11px;font-size:15.75px;color:#333;right:1211.40px;text-align:right;letter-spacing:-0.108px;margin-right:0.108px;">6,904,644</div>
<div class="t " style="top:491.11px;font-size:15.75px;color:#333;right:1074.40px;text-align:right;letter-spacing:-0.111px;margin-right:0.111px;">16,940</div>
<div class="t " style="top:491.11px;font-size:15.75px;color:#333;right:936.40px;text-align:right;letter-spacing:-0.108px;margin-right:0.108px;">2,726,000</div>
<div class="t " style="top:491.11px;font-size:15.75px;color:#333;right:799.40px;text-align:right;letter-spacing:-0.109px;margin-right:0.109px;">4,277</div>
<div class="t " style="top:491.11px;font-size:15.75px;color:#333;right:661.40px;text-align:right;letter-spacing:-0.111px;margin-right:0.111px;">85,994</div>
<div class="t " style="top:491.11px;font-size:15.75px;color:#333;right:524.40px;text-align:right;letter-spacing:-0.116px;margin-right:0.116px;">211</div>
<div class="t " style="top:491.11px;font-size:15.75px;color:#333;right:386.40px;text-align:right;letter-spacing:-0.111px;margin-right:0.111px;">21,006</div>
<div class="a" style="left:329px;top:555px;width:1221px;height:1px;background:#e3e6eb;"></div>
<div class="t " style="top:529.03px;font-size:17.5px;color:#1a1a1a;font-weight:700;left:377.30px;letter-spacing:-0.064px;">Tender Released</div>
<div class="t " style="top:528.61px;font-size:15.75px;color:#333;right:1211.40px;text-align:right;letter-spacing:-0.108px;margin-right:0.108px;">6,174,347</div>
<div class="t " style="top:528.61px;font-size:15.75px;color:#333;right:1074.40px;text-align:right;letter-spacing:-0.111px;margin-right:0.111px;">15,534</div>
<div class="t " style="top:528.61px;font-size:15.75px;color:#333;right:936.40px;text-align:right;letter-spacing:-0.108px;margin-right:0.108px;">3,031,000</div>
<div class="t " style="top:528.61px;font-size:15.75px;color:#333;right:799.40px;text-align:right;letter-spacing:-0.103px;margin-right:0.103px;">5,111</div>
<div class="t " style="top:528.61px;font-size:15.75px;color:#333;right:661.40px;text-align:right;letter-spacing:-0.112px;margin-right:0.112px;">162,698</div>
<div class="t " style="top:528.61px;font-size:15.75px;color:#333;right:524.40px;text-align:right;letter-spacing:-0.121px;margin-right:0.121px;">390</div>
<div class="t " style="top:528.61px;font-size:15.75px;color:#333;right:386.40px;text-align:right;letter-spacing:-0.112px;margin-right:0.112px;">465,765</div>
<div class="a" style="left:329px;top:593px;width:1221px;height:1px;background:#e3e6eb;"></div>
<div class="t " style="top:566.53px;font-size:17.5px;color:#1a1a1a;font-weight:700;left:377.30px;letter-spacing:-0.056px;">Vendor selection pro...</div>
<div class="t " style="top:566.11px;font-size:15.75px;color:#333;right:1211.40px;text-align:right;letter-spacing:-0.108px;margin-right:0.108px;">7,263,804</div>
<div class="t " style="top:566.11px;font-size:15.75px;color:#333;right:1074.40px;text-align:right;letter-spacing:-0.111px;margin-right:0.111px;">17,067</div>
<div class="t " style="top:566.11px;font-size:15.75px;color:#333;right:936.40px;text-align:right;letter-spacing:-0.108px;margin-right:0.108px;">2,607,000</div>
<div class="t " style="top:566.11px;font-size:15.75px;color:#333;right:799.40px;text-align:right;letter-spacing:-0.109px;margin-right:0.109px;">3,556</div>
<div class="t " style="top:566.11px;font-size:15.75px;color:#333;right:661.40px;text-align:right;letter-spacing:-0.112px;margin-right:0.112px;">133,906</div>
<div class="t " style="top:566.11px;font-size:15.75px;color:#333;right:524.40px;text-align:right;letter-spacing:-0.121px;margin-right:0.121px;">301</div>
<div class="t " style="top:566.11px;font-size:15.75px;color:#333;right:386.40px;text-align:right;letter-spacing:-0.112px;margin-right:0.112px;">264,772</div>
<div class="a" style="left:329px;top:630px;width:1221px;height:1px;background:#e3e6eb;"></div>
<svg class="a" style="left:345px;top:606.9px;" width="11.5" height="7.0" viewBox="0 0 11.5 7.0" preserveAspectRatio="none"><path d="M1 1 L5.75 6 L10.5 1" fill="none" stroke="#333" stroke-width="1.4"/></svg>
<div class="t " style="top:600.08px;font-size:17.5px;color:#1a1a1a;font-weight:700;left:361.50px;letter-spacing:-0.074px;">Cheque</div>
<div class="a" style="left:329px;top:668px;width:1221px;height:1px;background:#e3e6eb;"></div>
<div class="t " style="top:641.53px;font-size:17.5px;color:#1a1a1a;font-weight:700;left:377.30px;letter-spacing:-0.061px;">Deal closed</div>
<div class="t " style="top:641.11px;font-size:15.75px;color:#333;right:1211.40px;text-align:right;letter-spacing:-0.108px;margin-right:0.108px;">3,487,330</div>
<div class="t " style="top:641.11px;font-size:15.75px;color:#333;right:1074.40px;text-align:right;letter-spacing:-0.109px;margin-right:0.109px;">3,070</div>
<div class="t " style="top:641.11px;font-size:15.75px;color:#333;right:936.40px;text-align:right;letter-spacing:-0.112px;margin-right:0.112px;">384,400</div>
<div class="t " style="top:641.11px;font-size:15.75px;color:#333;right:799.40px;text-align:right;letter-spacing:-0.109px;margin-right:0.109px;">1,871</div>
<div class="t " style="top:641.11px;font-size:15.75px;color:#333;right:661.40px;text-align:right;letter-spacing:-0.112px;margin-right:0.112px;">102,148</div>
<div class="t " style="top:641.11px;font-size:15.75px;color:#333;right:524.40px;text-align:right;letter-spacing:-0.121px;margin-right:0.121px;">251</div>
<div class="t " style="top:641.11px;font-size:15.75px;color:#333;right:386.40px;text-align:right;letter-spacing:-0.111px;margin-right:0.111px;">83,674</div>
<div class="a" style="left:329px;top:705px;width:1221px;height:1px;background:#e3e6eb;"></div>
<div class="t " style="top:679.03px;font-size:17.5px;color:#1a1a1a;font-weight:700;left:377.30px;letter-spacing:-0.057px;">Finalized</div>
<div class="t " style="top:678.61px;font-size:15.75px;color:#333;right:1211.40px;text-align:right;letter-spacing:-0.108px;margin-right:0.108px;">2,772,515</div>
<div class="t " style="top:678.61px;font-size:15.75px;color:#333;right:1074.40px;text-align:right;letter-spacing:-0.109px;margin-right:0.109px;">2,374</div>
<div class="t " style="top:678.61px;font-size:15.75px;color:#333;right:936.40px;text-align:right;letter-spacing:-0.112px;margin-right:0.112px;">338,600</div>
<div class="t " style="top:678.61px;font-size:15.75px;color:#333;right:799.40px;text-align:right;letter-spacing:-0.109px;margin-right:0.109px;">1,685</div>
<div class="t " style="top:678.61px;font-size:15.75px;color:#333;right:661.40px;text-align:right;letter-spacing:-0.110px;margin-right:0.110px;">117,022</div>
<div class="t " style="top:678.61px;font-size:15.75px;color:#333;right:524.40px;text-align:right;letter-spacing:-0.121px;margin-right:0.121px;">294</div>
<div class="t " style="top:678.61px;font-size:15.75px;color:#333;right:386.40px;text-align:right;letter-spacing:-0.112px;margin-right:0.112px;">280,074</div>
<div class="a" style="left:329px;top:743px;width:1221px;height:1px;background:#e3e6eb;"></div>
<div class="t " style="top:716.53px;font-size:17.5px;color:#1a1a1a;font-weight:700;left:377.30px;letter-spacing:-0.064px;">Followup Required</div>
<div class="t " style="top:716.11px;font-size:15.75px;color:#333;right:1211.40px;text-align:right;letter-spacing:-0.108px;margin-right:0.108px;">3,259,395</div>
<div class="t " style="top:716.11px;font-size:15.75px;color:#333;right:1074.40px;text-align:right;letter-spacing:-0.109px;margin-right:0.109px;">3,784</div>
<div class="t " style="top:716.11px;font-size:15.75px;color:#333;right:936.40px;text-align:right;letter-spacing:-0.112px;margin-right:0.112px;">209,400</div>
<div class="t " style="top:716.11px;font-size:15.75px;color:#333;right:799.40px;text-align:right;letter-spacing:-0.109px;margin-right:0.109px;">1,020</div>
<div class="t " style="top:716.11px;font-size:15.75px;color:#333;right:661.40px;text-align:right;letter-spacing:-0.111px;margin-right:0.111px;">30,222</div>
<div class="t " style="top:716.11px;font-size:15.75px;color:#333;right:524.40px;text-align:right;letter-spacing:-0.121px;margin-right:0.121px;">225</div>
<div class="t " style="top:716.11px;font-size:15.75px;color:#333;right:386.40px;text-align:right;letter-spacing:-0.112px;margin-right:0.112px;">169,274</div>
<div class="a" style="left:329px;top:780px;width:1221px;height:1px;background:#e3e6eb;"></div>
<div class="t " style="top:754.03px;font-size:17.5px;color:#1a1a1a;font-weight:700;left:377.30px;letter-spacing:-0.058px;">Not Interested</div>
<div class="t " style="top:753.61px;font-size:15.75px;color:#333;right:1211.40px;text-align:right;letter-spacing:-0.108px;margin-right:0.108px;">3,495,295</div>
<div class="t " style="top:753.61px;font-size:15.75px;color:#333;right:1074.40px;text-align:right;letter-spacing:-0.109px;margin-right:0.109px;">3,245</div>
<div class="t " style="top:753.61px;font-size:15.75px;color:#333;right:936.40px;text-align:right;letter-spacing:-0.112px;margin-right:0.112px;">310,200</div>
<div class="t " style="top:753.61px;font-size:15.75px;color:#333;right:799.40px;text-align:right;letter-spacing:-0.109px;margin-right:0.109px;">1,533</div>
<div class="t " style="top:753.61px;font-size:15.75px;color:#333;right:661.40px;text-align:right;letter-spacing:-0.111px;margin-right:0.111px;">32,148</div>
<div class="t " style="top:753.61px;font-size:15.75px;color:#333;right:524.40px;text-align:right;letter-spacing:-0.121px;margin-right:0.121px;">210</div>
<div class="t " style="top:753.61px;font-size:15.75px;color:#333;right:386.40px;text-align:right;letter-spacing:-0.111px;margin-right:0.111px;">64,770</div>
<div class="a" style="left:329px;top:818px;width:1221px;height:1px;background:#e3e6eb;"></div>
<div class="t " style="top:791.53px;font-size:17.5px;color:#1a1a1a;font-weight:700;left:377.30px;letter-spacing:-0.066px;">Payment Released</div>
<div class="t " style="top:791.11px;font-size:15.75px;color:#333;right:1211.40px;text-align:right;letter-spacing:-0.108px;margin-right:0.108px;">3,126,415</div>
<div class="t " style="top:791.11px;font-size:15.75px;color:#333;right:1074.40px;text-align:right;letter-spacing:-0.109px;margin-right:0.109px;">3,442</div>
<div class="t " style="top:791.11px;font-size:15.75px;color:#333;right:936.40px;text-align:right;letter-spacing:-0.112px;margin-right:0.112px;">352,800</div>
<div class="t " style="top:791.11px;font-size:15.75px;color:#333;right:799.40px;text-align:right;letter-spacing:-0.109px;margin-right:0.109px;">1,633</div>
<div class="t " style="top:791.11px;font-size:15.75px;color:#333;right:661.40px;text-align:right;letter-spacing:-0.110px;margin-right:0.110px;">119,422</div>
<div class="t " style="top:791.11px;font-size:15.75px;color:#333;right:524.40px;text-align:right;letter-spacing:-0.121px;margin-right:0.121px;">334</div>
<div class="t " style="top:791.11px;font-size:15.75px;color:#333;right:386.40px;text-align:right;letter-spacing:-0.112px;margin-right:0.112px;">277,748</div>
<div class="a" style="left:329px;top:855px;width:1221px;height:1px;background:#e3e6eb;"></div>
<div class="t " style="top:829.03px;font-size:17.5px;color:#1a1a1a;font-weight:700;left:377.30px;letter-spacing:-0.059px;">Project delayed</div>
<div class="t " style="top:828.61px;font-size:15.75px;color:#333;right:1211.40px;text-align:right;letter-spacing:-0.108px;margin-right:0.108px;">3,003,950</div>
<div class="t " style="top:828.61px;font-size:15.75px;color:#333;right:1074.40px;text-align:right;letter-spacing:-0.109px;margin-right:0.109px;">2,969</div>
<div class="t " style="top:828.61px;font-size:15.75px;color:#333;right:936.40px;text-align:right;letter-spacing:-0.112px;margin-right:0.112px;">343,200</div>
<div class="t " style="top:828.61px;font-size:15.75px;color:#333;right:799.40px;text-align:right;letter-spacing:-0.109px;margin-right:0.109px;">1,698</div>
<div class="t " style="top:828.61px;font-size:15.75px;color:#333;right:661.40px;text-align:right;letter-spacing:-0.111px;margin-right:0.111px;">18,222</div>
<div class="t " style="top:828.61px;font-size:15.75px;color:#333;right:524.40px;text-align:right;letter-spacing:-0.121px;margin-right:0.121px;">193</div>
<div class="t " style="top:828.61px;font-size:15.75px;color:#333;right:386.40px;text-align:right;letter-spacing:-0.112px;margin-right:0.112px;">270,474</div>
<div class="a" style="left:329px;top:893px;width:1221px;height:1px;background:#e3e6eb;"></div>
<div class="t " style="top:866.53px;font-size:17.5px;color:#1a1a1a;font-weight:700;left:377.30px;letter-spacing:-0.064px;">Tender Released</div>
<div class="t " style="top:866.11px;font-size:15.75px;color:#333;right:1211.40px;text-align:right;letter-spacing:-0.108px;margin-right:0.108px;">3,854,150</div>
<div class="t " style="top:866.11px;font-size:15.75px;color:#333;right:1074.40px;text-align:right;letter-spacing:-0.109px;margin-right:0.109px;">3,180</div>
<div class="t " style="top:866.11px;font-size:15.75px;color:#333;right:936.40px;text-align:right;letter-spacing:-0.112px;margin-right:0.112px;">347,400</div>
<div class="t " style="top:866.11px;font-size:15.75px;color:#333;right:799.40px;text-align:right;letter-spacing:-0.109px;margin-right:0.109px;">1,742</div>
<div class="t " style="top:866.11px;font-size:15.75px;color:#333;right:661.40px;text-align:right;letter-spacing:-0.110px;margin-right:0.110px;">110,074</div>
<div class="t " style="top:866.11px;font-size:15.75px;color:#333;right:524.40px;text-align:right;letter-spacing:-0.121px;margin-right:0.121px;">252</div>
<div class="t " style="top:866.11px;font-size:15.75px;color:#333;right:386.40px;text-align:right;letter-spacing:-0.112px;margin-right:0.112px;">134,296</div>
<svg class="a" style="left:597.5px;top:196.5px;" width="7.5" height="10.0" viewBox="0 0 7.5 10.0" preserveAspectRatio="none"><path d="M1 1 L6 5 L1 9" fill="none" stroke="#333" stroke-width="1.5"/></svg>
<div class="t " style="top:193.87px;font-size:16.8px;color:#2a2f36;left:623.30px;text-shadow:0.3px 0 0 #2a2f36;letter-spacing:0.939px;">Agent</div>
<svg class="a" style="left:873px;top:196.5px;" width="7.5" height="10.0" viewBox="0 0 7.5 10.0" preserveAspectRatio="none"><path d="M1 1 L6 5 L1 9" fill="none" stroke="#333" stroke-width="1.5"/></svg>
<div class="t " style="top:193.87px;font-size:16.8px;color:#2a2f36;left:899.30px;text-shadow:0.3px 0 0 #2a2f36;letter-spacing:0.998px;">Makemytrip</div>
<svg class="a" style="left:1146px;top:157px;" width="12.5" height="7.5" viewBox="0 0 12.5 7.5" preserveAspectRatio="none"><path d="M1 1 L6.25 6 L11.5 1" fill="none" stroke="#333" stroke-width="1.5"/></svg>
<div class="t " style="top:152.88px;font-size:17.5px;color:#111;font-weight:700;left:1173.80px;letter-spacing:0.103px;">Website</div>
<div class="t " style="top:188.98px;font-size:17.5px;color:#111;font-weight:700;left:1142.50px;letter-spacing:-0.124px;">Client Escalation</div>
<div class="t " style="top:188.98px;font-size:17.5px;color:#111;font-weight:700;left:1417.40px;letter-spacing:-0.310px;">Client Visit</div>
<div class="t " style="top:227.30px;font-size:17px;color:#111;font-weight:700;left:594.30px;letter-spacing:0.235px;">sum_travel...</div>
<div class="t " style="top:227.30px;font-size:17px;color:#111;font-weight:700;left:732.50px;letter-spacing:0.177px;">sum_sourc...</div>
<div class="t " style="top:227.30px;font-size:17px;color:#111;font-weight:700;left:870.20px;letter-spacing:0.235px;">sum_travel...</div>
<div class="t " style="top:227.30px;font-size:17px;color:#111;font-weight:700;left:1007.50px;letter-spacing:0.177px;">sum_sourc...</div>
<div class="t " style="top:227.30px;font-size:17px;color:#111;font-weight:700;left:1145.50px;letter-spacing:0.235px;">sum_travel...</div>
<div class="t " style="top:227.30px;font-size:17px;color:#111;font-weight:700;left:1282.50px;letter-spacing:0.177px;">sum_sourc...</div>
<div class="t " style="top:227.30px;font-size:17px;color:#111;font-weight:700;left:1420.00px;letter-spacing:0.235px;">sum_travel...</div>
<div class="a" style="left:1544px;top:270px;width:3px;height:278.5px;background:#808080;border-radius:1.5px;"></div>
<svg class="a" style="left:1522px;top:879.5px;" width="16" height="16.0" viewBox="0 0 16 16.0" preserveAspectRatio="none"><path d="M9 1 L15 7 L13 8 L10.5 10.5 L10.5 13.5 L9 15 L1 7 L2.5 5.5 L5.5 5.5 L8 3 Z" fill="#222"/><path d="M4.5 11.5 L0.5 15.5" stroke="#222" stroke-width="1.8"/></svg>
<svg class="a" style="left:1541.5px;top:880px;" width="10.0" height="14" viewBox="0 0 10.0 14" preserveAspectRatio="none"><path d="M1.5 1 H8.5 M1.5 13 H8.5 M2.5 1 V3.5 L5 7 L2.5 10.5 V13 M7.5 1 V3.5 L5 7 L7.5 10.5 V13" fill="none" stroke="#5aaaf0" stroke-width="1.3"/></svg>
<div class="a" style="left:1565px;top:54px;width:346px;height:848px;border:1px solid #dcdcdc;background:#fff;"></div>
<div class="a" style="left:1566px;top:84.5px;width:326px;height:1.0px;background:#ececec;"></div>
<div class="a" style="left:1591px;top:84px;width:128.5px;height:2px;background:#1a8cff;"></div>
<svg class="a" style="left:1591.5px;top:62.5px;" width="16.5" height="15.0" viewBox="0 0 16.5 15.0" preserveAspectRatio="none"><path d="M1 0 V14 H16" fill="none" stroke="#1a8cff" stroke-width="1.8"/><path d="M3.5 12 V8 L6.5 4.5 L9 8 L12 4 L14.5 7 V12 Z" fill="#1a8cff"/></svg>
<div class="t " style="top:61.88px;font-size:17.5px;color:#1a8cff;left:1621.30px;letter-spacing:0.005px;">Visualization</div>
<svg class="a" style="left:1769.5px;top:68px;" width="16.5" height="4" viewBox="0 0 16.5 4" preserveAspectRatio="none"><circle cx="2" cy="2" r="1.5" fill="#333"/><circle cx="8" cy="2" r="1.5" fill="#333"/><circle cx="14" cy="2" r="1.5" fill="#333"/></svg>
<div class="a" style="left:1576px;top:86px;width:324px;height:85px;border:1px solid #dadada;border-top:none;border-radius:0 0 3px 3px;"></div>
<svg class="a" style="left:1619.5px;top:99.5px;" width="26.5" height="26.5" viewBox="0 0 26.5 26.5" preserveAspectRatio="none"><path d="M13.25 1.2 A12 12 0 1 1 1.9 9.5" fill="none" stroke="#2b2b2b" stroke-width="1.7"/></svg>
<div class="t " style="top:134.90px;font-size:17px;color:#2b2b2b;left:1597.90px;letter-spacing:0.147px;">Progress</div>
<svg class="a" style="left:1723px;top:101px;" width="22" height="22.5" viewBox="0 0 22 22.5" preserveAspectRatio="none"><path d="M1 0 V21.5 H21" fill="none" stroke="#2b2b2b" stroke-width="1.6"/><circle cx="6" cy="15.5" r="2.3" fill="none" stroke="#2b2b2b" stroke-width="1.4"/><circle cx="13" cy="11.5" r="2.3" fill="none" stroke="#2b2b2b" stroke-width="1.4"/><circle cx="10" cy="4.5" r="2.3" fill="none" stroke="#2b2b2b" stroke-width="1.4"/><path d="M8 14.5 L11 12.5 M12 9.5 L11 6.5 M12.5 3.5 L19 2 M15 11 L19 11" stroke="#2b2b2b" stroke-width="1.3"/></svg>
<div class="t " style="top:134.90px;font-size:17px;color:#2b2b2b;left:1706.20px;letter-spacing:0.203px;">Relation</div>
<svg class="a" style="left:1831.5px;top:100.5px;" width="24.5" height="23.5" viewBox="0 0 24.5 23.5" preserveAspectRatio="none"><rect x="1" y="3.5" width="22" height="19" fill="none" stroke="#8f8f8f" stroke-width="1.8"/><path d="M1 8.5 H23 M6.5 0.5 V5 M17.5 0.5 V5" stroke="#8f8f8f" stroke-width="1.8"/></svg>
<div class="t " style="top:134.90px;font-size:17px;color:#8f8f8f;left:1807.25px;letter-spacing:0.464px;">Calendar</div>
<div class="a" style="left:1576px;top:171.5px;width:324px;height:121.0px;border:1px solid #dadada;border-radius:3px;"></div>
<div class="a" style="left:1577px;top:172.5px;width:322px;height:35.0px;background:#f9f9f9;border-bottom:1px solid #dadada;border-radius:3px 3px 0 0;"></div>
<svg class="a" style="left:1584px;top:185.5px;" width="13.5" height="8.5" viewBox="0 0 13.5 8.5" preserveAspectRatio="none"><path d="M1 1 L6.75 7.5 L12.5 1" fill="none" stroke="#333" stroke-width="1.6"/></svg>
<div class="t " style="top:181.23px;font-size:17.2px;color:#2b2b2b;left:1614.30px;letter-spacing:0.210px;">Maps</div>
<svg class="a" style="left:1621px;top:223px;" width="23" height="22" viewBox="0 0 23 22" preserveAspectRatio="none"><path d="M1.5 0.5 V20.5 H22" fill="none" stroke="#8f8f8f" stroke-width="1.8"/><path d="M5 14 L10 8.5 L13.5 12 L20 6.5" fill="none" stroke="#8f8f8f" stroke-width="1.6"/></svg>
<div class="t " style="top:255.90px;font-size:17px;color:#8f8f8f;left:1615.75px;letter-spacing:0.340px;">Line</div>
<svg class="a" style="left:1727px;top:223px;" width="23" height="22" viewBox="0 0 23 22" preserveAspectRatio="none"><path d="M1.5 0.5 V20.5 H22" fill="none" stroke="#8f8f8f" stroke-width="1.8"/><circle cx="6" cy="15" r="1.4" fill="#8f8f8f"/><circle cx="10" cy="9.5" r="1.3" fill="#8f8f8f"/><circle cx="13.5" cy="14.5" r="2" fill="#8f8f8f"/><circle cx="18" cy="5" r="1.4" fill="#8f8f8f"/></svg>
<div class="t " style="top:255.90px;font-size:17px;color:#8f8f8f;left:1719.00px;letter-spacing:0.050px;">Point</div>
<svg class="a" style="left:1830px;top:222px;" width="27" height="23" viewBox="0 0 27 23" preserveAspectRatio="none"><path d="M13.5 1 L26 21.5 H1 Z" fill="none" stroke="#8f8f8f" stroke-width="1.9" stroke-linejoin="round"/><path d="M13.5 7.5 L21 18.5 H6 Z" fill="none" stroke="#8f8f8f" stroke-width="1.5"/><path d="M13.5 12.5 L16.5 16.5 H10.5 Z" fill="none" stroke="#8f8f8f" stroke-width="1.2"/></svg>
<div class="t " style="top:255.90px;font-size:17px;color:#8f8f8f;left:1807.20px;letter-spacing:0.660px;">Heatmap</div>
<div class="a" style="left:1576px;top:292.2px;width:324px;height:121.0px;border:1px solid #dadada;border-radius:3px;"></div>
<div class="a" style="left:1577px;top:293.2px;width:322px;height:35.0px;background:#f9f9f9;border-bottom:1px solid #dadada;border-radius:3px 3px 0 0;"></div>
<svg class="a" style="left:1584px;top:306.2px;" width="13.5" height="8.5" viewBox="0 0 13.5 8.5" preserveAspectRatio="none"><path d="M1 1 L6.75 7.5 L12.5 1" fill="none" stroke="#333" stroke-width="1.6"/></svg>
<div class="t " style="top:301.93px;font-size:17.2px;color:#2b2b2b;left:1614.30px;letter-spacing:0.164px;">Table</div>
<svg class="a" style="left:1620px;top:345px;" width="25" height="19" viewBox="0 0 25 19" preserveAspectRatio="none"><rect x="1.1" y="1.1" width="22.8" height="16.8" fill="none" stroke="#2b2b2b" stroke-width="2.2"/><path d="M8.5 1 V18 M16.2 1 V18 M1 6.8 H24 M1 12.3 H24" stroke="#2b2b2b" stroke-width="1.8"/></svg>
<div class="t " style="top:377.20px;font-size:17px;color:#2b2b2b;left:1611.60px;letter-spacing:0.232px;">Table</div>
<div class="a" style="left:1576px;top:413.4px;width:324px;height:121.0px;border:1px solid #dadada;border-radius:3px;"></div>
<div class="a" style="left:1577px;top:414.4px;width:322px;height:35.0px;background:#f9f9f9;border-bottom:1px solid #dadada;border-radius:3px 3px 0 0;"></div>
<svg class="a" style="left:1584px;top:427.4px;" width="13.5" height="8.5" viewBox="0 0 13.5 8.5" preserveAspectRatio="none"><path d="M1 1 L6.75 7.5 L12.5 1" fill="none" stroke="#333" stroke-width="1.6"/></svg>
<div class="t " style="top:423.13px;font-size:17.2px;color:#2d8ee6;left:1614.30px;letter-spacing:0.182px;">CrossTab</div>
<svg class="a" style="left:1620px;top:466px;" width="26" height="19" viewBox="0 0 26 19" preserveAspectRatio="none"><rect x="0.5" y="0.5" width="25" height="18" fill="none" stroke="#3a97ea" stroke-width="1"/><path d="M6.5 0.5 V18.5 M12.5 0.5 V18.5 M19.5 0.5 V18.5 M0.5 5.5 H25.5 M0.5 9.5 H25.5 M0.5 13.5 H25.5" stroke="#3a97ea" stroke-width="1" stroke-opacity="0.75" fill="none"/><rect x="1.8" y="2" width="3.4000000000000004" height="2" fill="#3a97ea"/><rect x="8" y="2" width="3" height="2" fill="#3a97ea"/><rect x="14" y="2" width="4" height="2" fill="#3a97ea"/><rect x="21" y="2" width="3" height="2" fill="#3a97ea"/><rect x="1.8" y="6.8" width="3.4" height="2" fill="#3a97ea"/><rect x="1.8" y="10.8" width="3.4" height="2" fill="#3a97ea"/><rect x="1.8" y="14.8" width="3.4" height="2" fill="#3a97ea"/></svg>
<div class="t " style="top:498.30px;font-size:17px;color:#2d8ee6;left:1597.00px;letter-spacing:0.372px;">Crosstab</div>
<div class="a" style="left:1576px;top:534.8px;width:324px;height:121.0px;border:1px solid #dadada;border-radius:3px;"></div>
<div class="a" style="left:1577px;top:535.8px;width:322px;height:35.0px;background:#f9f9f9;border-bottom:1px solid #dadada;border-radius:3px 3px 0 0;"></div>
<svg class="a" style="left:1584px;top:548.8px;" width="13.5" height="8.5" viewBox="0 0 13.5 8.5" preserveAspectRatio="none"><path d="M1 1 L6.75 7.5 L12.5 1" fill="none" stroke="#333" stroke-width="1.6"/></svg>
<div class="t " style="top:544.53px;font-size:17.2px;color:#2b2b2b;left:1614.30px;letter-spacing:0.156px;">Grid Table</div>
<svg class="a" style="left:1620px;top:587px;" width="26" height="19" viewBox="0 0 26 19" preserveAspectRatio="none"><rect x="0.5" y="0.5" width="25" height="18" fill="none" stroke="#555" stroke-width="1"/><path d="M6.5 0.5 V18.5 M12.5 0.5 V18.5 M19.5 0.5 V18.5 M0.5 5.5 H25.5 M0.5 9.5 H25.5 M0.5 13.5 H25.5" stroke="#555" stroke-width="1" stroke-opacity="0.75" fill="none"/><rect x="1.8" y="2" width="3.4000000000000004" height="2" fill="#555"/><rect x="8" y="2" width="3" height="2" fill="#555"/><rect x="14" y="2" width="4" height="2" fill="#555"/><rect x="21" y="2" width="3" height="2" fill="#555"/><rect x="1.8" y="6.8" width="3.4" height="2" fill="#555"/><rect x="1.8" y="10.8" width="3.4" height="2" fill="#555"/><rect x="1.8" y="14.8" width="3.4" height="2" fill="#555"/></svg>
<div class="t " style="top:619.10px;font-size:17px;color:#2b2b2b;left:1594.30px;letter-spacing:0.270px;">Grid table</div>
<div class="a" style="left:1576px;top:656.2px;width:324px;height:121.0px;border:1px solid #dadada;border-radius:3px;"></div>
<div class="a" style="left:1577px;top:657.2px;width:322px;height:35.0px;background:#f9f9f9;border-bottom:1px solid #dadada;border-radius:3px 3px 0 0;"></div>
<svg class="a" style="left:1584px;top:670.2px;" width="13.5" height="8.5" viewBox="0 0 13.5 8.5" preserveAspectRatio="none"><path d="M1 1 L6.75 7.5 L12.5 1" fill="none" stroke="#333" stroke-width="1.6"/></svg>
<div class="t " style="top:665.93px;font-size:17.2px;color:#2b2b2b;left:1614.30px;letter-spacing:0.186px;">Card</div>
<svg class="a" style="left:1619.5px;top:707.5px;" width="26.5" height="20.5" viewBox="0 0 26.5 20.5" preserveAspectRatio="none"><rect x="1" y="1" width="24" height="18.5" fill="none" stroke="#8f8f8f" stroke-width="2"/><path d="M1 6 H25" stroke="#8f8f8f" stroke-width="2"/><rect x="17" y="13" width="5" height="2.5" fill="#8f8f8f"/></svg>
<div class="t " style="top:740.80px;font-size:17px;color:#8f8f8f;left:1619.85px;letter-spacing:-0.701px;">KPI</div>
<svg class="a" style="left:1726px;top:708px;" width="25" height="18.5" viewBox="0 0 25 18.5" preserveAspectRatio="none"><path d="M1 17 L8.5 9.5 L12 13 L21 4" fill="none" stroke="#8f8f8f" stroke-width="2"/><path d="M15.5 2 H23.5 V10 Z" fill="#8f8f8f"/></svg>
<div class="t " style="top:740.80px;font-size:17px;color:#8f8f8f;left:1716.30px;letter-spacing:0.044px;">Trend</div>
<div class="a" style="left:1576px;top:777.2px;width:324px;height:120.79999999999995px;border:1px solid #dadada;border-radius:3px;"></div>
<div class="a" style="left:1577px;top:778.2px;width:322px;height:35.0px;background:#f9f9f9;border-bottom:1px solid #dadada;border-radius:3px 3px 0 0;"></div>
<svg class="a" style="left:1584px;top:791.2px;" width="13.5" height="8.5" viewBox="0 0 13.5 8.5" preserveAspectRatio="none"><path d="M1 1 L6.75 7.5 L12.5 1" fill="none" stroke="#333" stroke-width="1.6"/></svg>
<div class="t " style="top:786.93px;font-size:17.2px;color:#2b2b2b;left:1614.30px;letter-spacing:-0.490px;">VF</div>
<div class="a" style="left:1621px;top:829px;width:28px;height:19px;border:1px solid #777;border-radius:1px;"></div>
<div class="t " style="top:836.15px;font-size:7.5px;color:#333;font-weight:700;left:1622.00px;width:26px;text-align:center;">&lt;VF&gt;</div>
<div class="t " style="top:862.10px;font-size:17px;color:#2b2b2b;left:1624.00px;letter-spacing:0.369px;">Vf</div>
<svg class="a" style="left:1889px;top:879px;" width="16" height="16" viewBox="0 0 16 16" preserveAspectRatio="none"><path d="M9 1 L15 7 L13 8 L10.5 10.5 L10.5 13.5 L9 15 L1 7 L2.5 5.5 L5.5 5.5 L8 3 Z" fill="#222"/><path d="M4.5 11.5 L0.5 15.5" stroke="#222" stroke-width="1.8"/></svg>
</body></html>
